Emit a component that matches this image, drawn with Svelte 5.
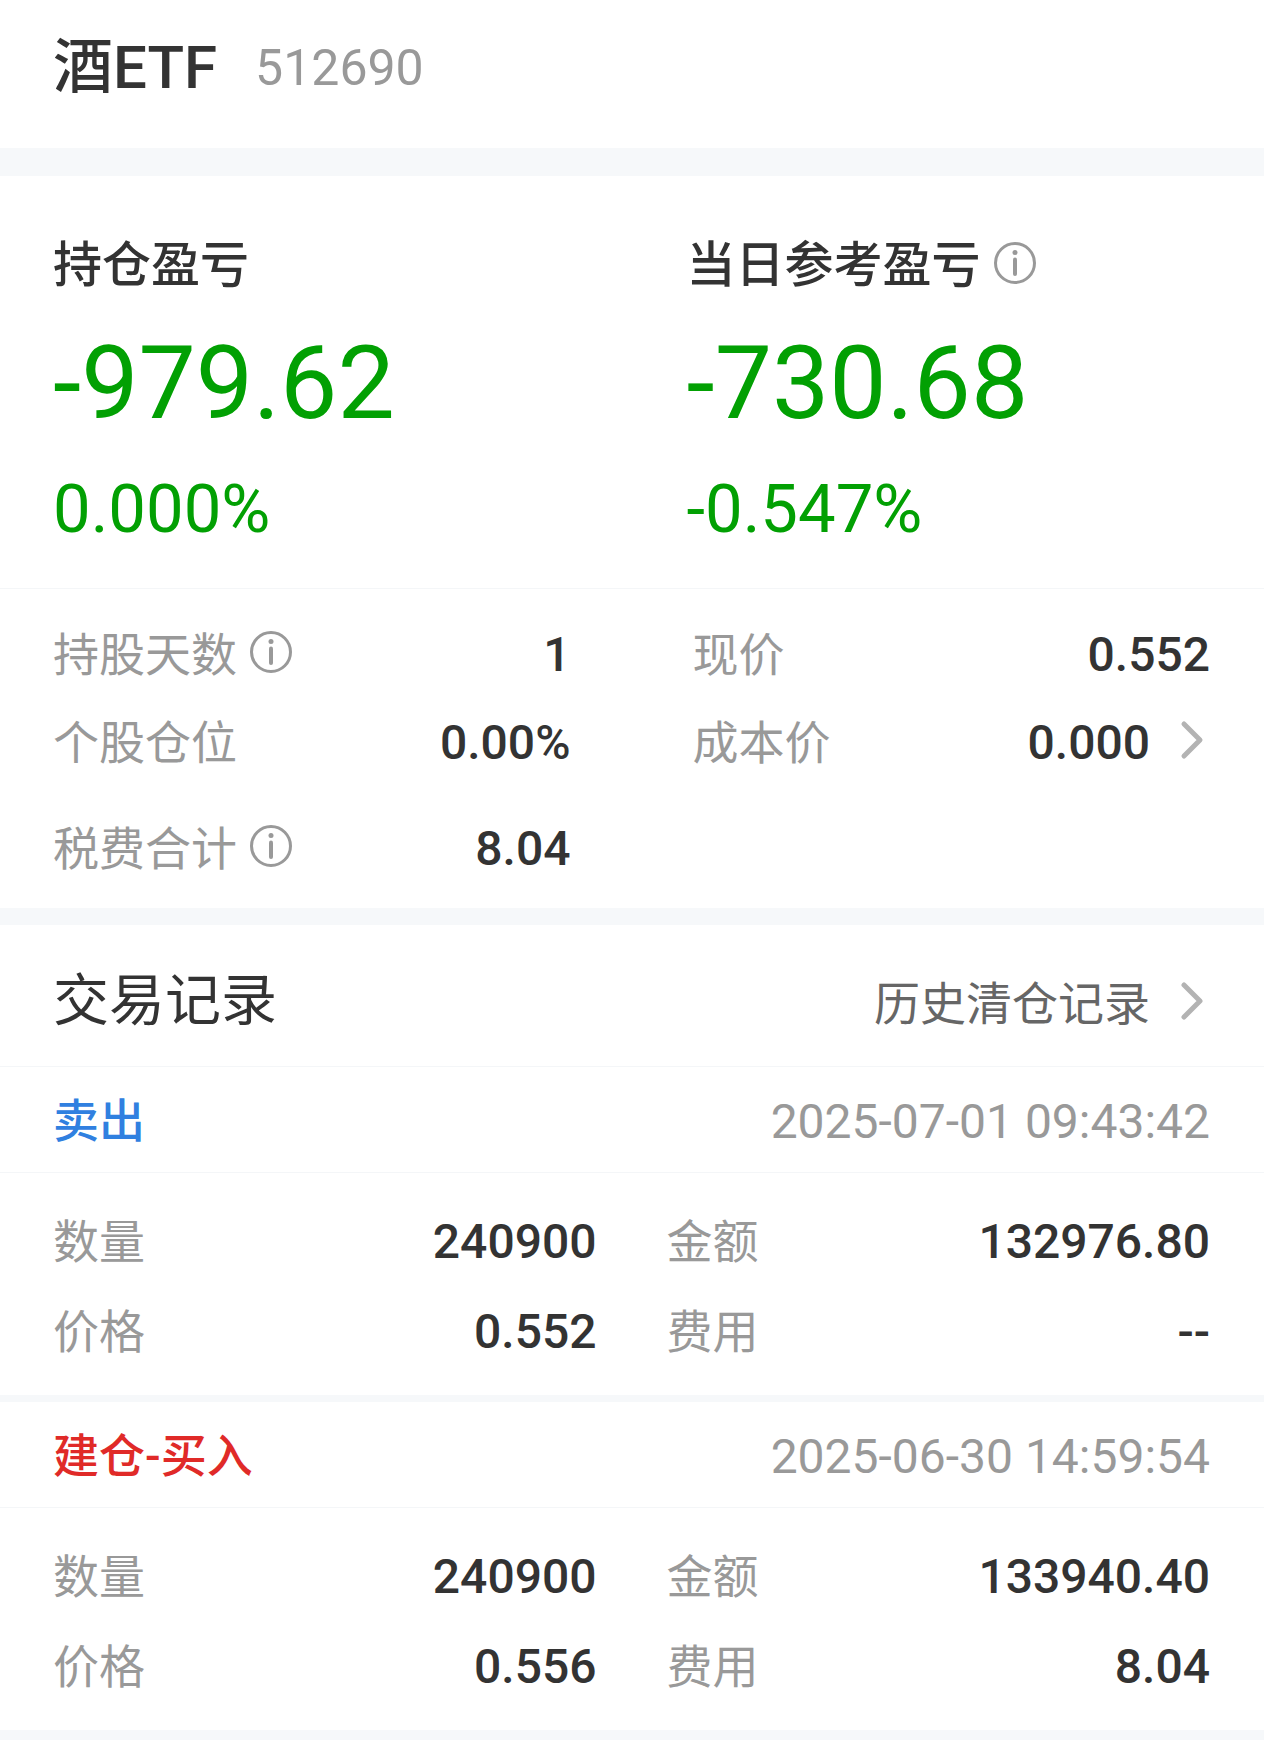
<script>
  const summary = [
    { label: '持仓盈亏', amount: '-979.62', percent: '0.000%', info: false },
    { label: '当日参考盈亏', amount: '-730.68', percent: '-0.547%', info: true }
  ];

  const stats = [
    { label: '持股天数', value: '1', info: true },
    { label: '现价', value: '0.552' },
    { label: '个股仓位', value: '0.00%' },
    { label: '成本价', value: '0.000', link: true },
    { label: '税费合计', value: '8.04', info: true, spaced: true }
  ];

  const records = [
    {
      type: '卖出',
      side: 'sell',
      time: '2025-07-01 09:43:42',
      fields: [
        ['数量', '240900'],
        ['金额', '132976.80'],
        ['价格', '0.552'],
        ['费用', '--']
      ]
    },
    {
      type: '建仓-买入',
      side: 'buy',
      time: '2025-06-30 14:59:54',
      fields: [
        ['数量', '240900'],
        ['金额', '133940.40'],
        ['价格', '0.556'],
        ['费用', '8.04']
      ]
    }
  ];
</script>

{#snippet infoButton(label)}
  <button class="info" type="button" aria-label={`${label}说明`}>
    <svg viewBox="0 0 44 44" aria-hidden="true">
      <circle cx="22" cy="22" r="19.5" fill="none" stroke="currentColor" stroke-width="3" />
      <circle cx="22" cy="11.5" r="2.5" fill="currentColor" />
      <path d="M22 18.5V33" fill="none" stroke="currentColor" stroke-width="4" stroke-linecap="round" />
    </svg>
  </button>
{/snippet}

{#snippet chevron()}
  <svg class="chevron" viewBox="0 0 24 40" aria-hidden="true">
    <path d="M4 4L20 20L4 36" fill="none" stroke="currentColor" stroke-width="5" stroke-linecap="round" stroke-linejoin="round" />
  </svg>
{/snippet}

<main>
  <header>
    <h1>酒ETF</h1>
    <span class="code">512690</span>
  </header>

  <section class="summary">
    {#each summary as item}
      <div>
        <h2>{item.label}{#if item.info}{@render infoButton(item.label)}{/if}</h2>
        <p class="amount">{item.amount}</p>
        <p class="percent">{item.percent}</p>
      </div>
    {/each}
  </section>

  <dl class="stats">
    {#each stats as item}
      <div class="field" class:spaced={item.spaced}>
        <dt>{item.label}{#if item.info}{@render infoButton(item.label)}{/if}</dt>
        <dd>
          {#if item.link}
            <a href="#cost">{item.value}{@render chevron()}</a>
          {:else}
            {item.value}
          {/if}
        </dd>
      </div>
    {/each}
  </dl>

  <section class="history">
    <div class="heading">
      <h2>交易记录</h2>
      <a href="#history">历史清仓记录{@render chevron()}</a>
    </div>
    {#each records as record}
      <article>
        <div class="caption">
          <h3 class={record.side}>{record.type}</h3>
          <time>{record.time}</time>
        </div>
        <dl>
          {#each record.fields as [label, value]}
            <div class="field">
              <dt>{label}</dt>
              <dd>{value}</dd>
            </div>
          {/each}
        </dl>
      </article>
    {/each}
  </section>
</main>

<style>
  :global(body) {
    margin: 0;
    background: #f6f8fa;
  }

  main {
    color: #333;
    font-family: Roboto, 'Noto Sans CJK SC', sans-serif;
    font-size: 46px;
  }

  h1,
  h2,
  h3,
  p,
  dl,
  dd {
    margin: 0;
    font-weight: 400;
  }

  a {
    color: inherit;
    text-decoration: none;
  }

  header {
    display: flex;
    align-items: center;
    gap: 38px;
    padding: 26px 54px 38px 53px;
    background: #fff;
  }

  h1 {
    font-size: 60px;
    font-weight: 500;
    line-height: 84px;
  }

  .code {
    color: #999;
    font-size: 50px;
    line-height: 84px;
  }

  .summary {
    display: grid;
    grid-template-columns: 1fr 1fr;
    gap: 110px;
    margin-top: 28px;
    padding: 58px 54px 38px 53px;
    background: #fff;
    border-bottom: 1px solid #f4f6f8;
  }

  .summary h2 {
    display: flex;
    align-items: center;
    font-size: 49px;
    font-weight: 500;
    line-height: 64px;
    white-space: nowrap;
  }

  .amount,
  .percent {
    color: #02a003;
  }

  .amount {
    font-size: 102px;
    line-height: 170px;
  }

  .percent {
    font-size: 67px;
    line-height: 82px;
  }

  .info {
    display: flex;
    flex: none;
    margin: 0 0 6px 12px;
    padding: 0;
    border: 0;
    background: none;
    color: #999;
  }

  .info svg {
    width: 44px;
    height: 44px;
  }

  .chevron {
    width: 24px;
    height: 40px;
    margin: 0 6px 6px 30px;
    color: #b3b3b3;
  }

  .field {
    display: flex;
    align-items: center;
    justify-content: space-between;
  }

  dt {
    display: flex;
    align-items: center;
    color: #999;
  }

  dd {
    font-size: 48px;
    font-weight: 500;
  }

  dd a,
  .heading a {
    display: flex;
    align-items: center;
  }

  .stats {
    display: grid;
    grid-template-columns: 1fr 1fr;
    column-gap: 122px;
    padding: 22px 54px 15px 53px;
    background: #fff;
    line-height: 88px;
  }

  .spaced {
    margin-top: 18px;
  }

  .history {
    margin-top: 17px;
  }

  .heading,
  .caption {
    display: flex;
    align-items: center;
    justify-content: space-between;
    padding: 4px 54px 0 53px;
    background: #fff;
    border-bottom: 1px solid #f4f6f8;
  }

  .heading {
    padding-top: 11px;
    line-height: 130px;
  }

  .heading h2 {
    font-size: 56px;
  }

  .heading a {
    padding-top: 6px;
    color: #666;
    line-height: 124px;
  }

  .caption {
    line-height: 101px;
  }

  .caption h3 {
    font-size: 46px;
    font-weight: 500;
  }

  .sell {
    color: #3080e0;
  }

  .buy {
    color: #e02a28;
  }

  time {
    color: #999;
    font-size: 48px;
  }

  article + article {
    margin-top: 7px;
  }

  article dl {
    display: grid;
    grid-template-columns: 1fr 1fr;
    column-gap: 70px;
    padding: 24px 54px 18px 53px;
    background: #fff;
    line-height: 90px;
  }
</style>
